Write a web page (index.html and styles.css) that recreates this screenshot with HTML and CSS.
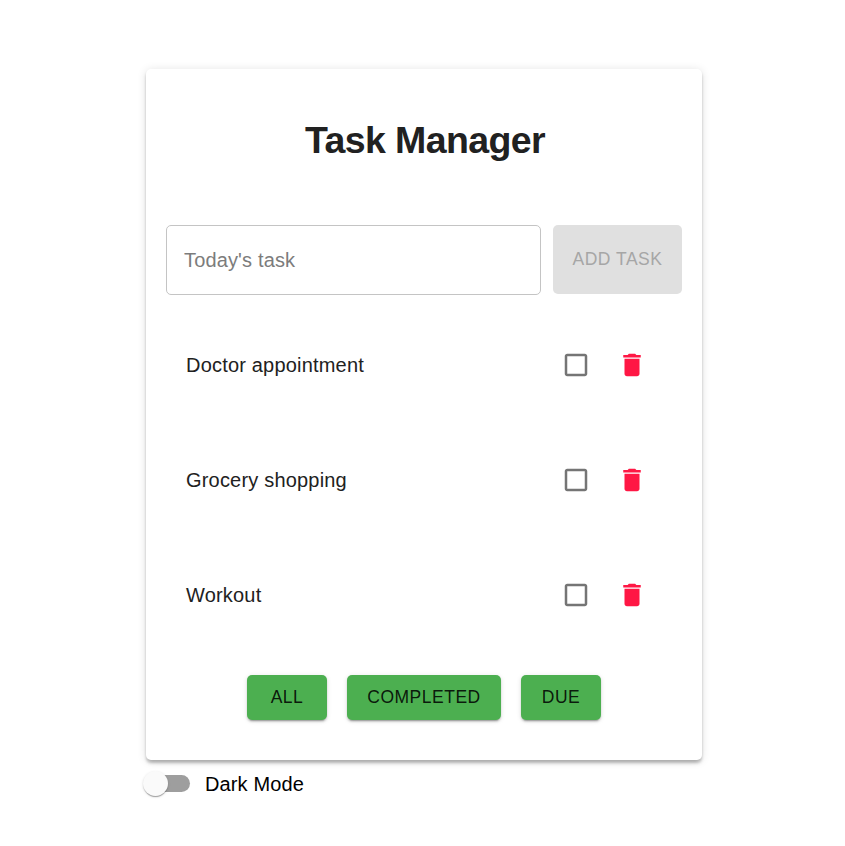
FILE: index.html
```html
<!DOCTYPE html>
<html lang="en">
<head>
<meta charset="utf-8">
<title>Task Manager</title>
<link rel="stylesheet" href="styles.css">
</head>
<body>
<svg class="sprite" width="0" height="0">
  <symbol id="box" viewBox="0 0 24 24"><path d="M19 5v14H5V5h14m0-2H5c-1.1 0-2 .9-2 2v14c0 1.1.9 2 2 2h14c1.1 0 2-.9 2-2V5c0-1.1-.9-2-2-2z"/></symbol>
  <symbol id="trash" viewBox="0 0 24 24"><path d="M6 19c0 1.1.9 2 2 2h8c1.1 0 2-.9 2-2V7H6v12zM19 4h-3.500l-1-1h-5l-1 1H5v2h14V4z"/></symbol>
</svg>
<main class="page">
  <section class="card">
    <h1 class="title">Task Manager</h1>
    <form class="entry">
      <input class="field" type="text" placeholder="Today's task" aria-label="Task">
      <button class="btn add" type="button" disabled>Add Task</button>
    </form>
    <ul class="tasks">
      <li class="task"><span class="name">Doctor appointment</span><svg class="icon"><use href="#box"/></svg><svg class="icon trash"><use href="#trash"/></svg></li>
      <li class="task"><span class="name">Grocery shopping</span><svg class="icon"><use href="#box"/></svg><svg class="icon trash"><use href="#trash"/></svg></li>
      <li class="task"><span class="name">Workout</span><svg class="icon"><use href="#box"/></svg><svg class="icon trash"><use href="#trash"/></svg></li>
    </ul>
    <div class="filters">
      <button class="btn filter" type="button">All</button>
      <button class="btn filter completed" type="button">Completed</button>
      <button class="btn filter" type="button">Due</button>
    </div>
  </section>
  <label class="mode"><span class="switch"><span class="thumb"></span></span>Dark Mode</label>
</main>
</body>
</html>
```
FILE: styles.css
```css
* { box-sizing: border-box; }
body {
  margin: 0;
  background: #fff;
  font-family: "Liberation Sans", Arial, sans-serif;
  font-size: 20px;
  color: #212121;
}
.sprite { display: block; }
.page { width: 556px; margin: 69px 0 0 146px; }
.card {
  height: 691px;
  padding: 45px 20px 0;
  border-radius: 5px;
  background: #fff;
  box-shadow: 0 4px 5px -2.5px rgba(0,0,0,.2), 0 2.5px 2.5px 0 rgba(0,0,0,.14), 0 1px 10px 0 rgba(0,0,0,.12);
}
.title {
  margin: 0 0 59px;
  padding-left: 2px;
  line-height: 52px;
  font-size: 37.5px;
  letter-spacing: -.6px;
  text-align: center;
}
.entry { display: flex; align-items: flex-start; gap: 12px; }
.field {
  width: 375px;
  height: 70px;
  padding: 0 17px;
  border: 1px solid #c4c4c4;
  border-radius: 5px;
  background: #fff;
  font: inherit;
  letter-spacing: .15px;
}
.field::placeholder { color: #7c7c7c; opacity: 1; }
.btn {
  border: 0;
  border-radius: 5px;
  font-family: inherit;
  font-size: 17.5px;
  letter-spacing: .5px;
  text-transform: uppercase;
  padding: 0;
}
.add { width: 129px; height: 69px; background: #e0e0e0; color: #a6a6a6; }
.tasks { list-style: none; margin: 12px 0 0; padding: 0 35px 0 20px; }
.task { display: flex; align-items: center; height: 115px; }
.name { flex: 1; padding-top: 2px; letter-spacing: .19px; }
.icon { width: 30px; height: 30px; fill: #757575; }
.trash { margin-left: 26px; fill: #ff1744; }
.filters { display: flex; justify-content: center; gap: 20px; margin-top: 23px; }
.filter {
  width: 80px;
  height: 45px;
  background: #4caf50;
  color: rgba(0, 0, 0, .87);
  box-shadow: 0 3px 1px -2px rgba(0,0,0,.2), 0 2px 2px 0 rgba(0,0,0,.14), 0 1px 5px 0 rgba(0,0,0,.12);
}
.completed { width: 154px; }
.mode { display: flex; align-items: center; height: 48px; color: #000; letter-spacing: .12px; }
.switch {
  position: relative;
  width: 42px;
  height: 17px;
  margin: 0 15px 1px 2px;
  border-radius: 9px;
  background: #9e9e9e;
}
.thumb {
  position: absolute;
  left: -5px;
  top: -4px;
  width: 25px;
  height: 25px;
  border-radius: 50%;
  background: #fafafa;
  box-shadow: 0 2px 1px -1px rgba(0,0,0,.2), 0 1px 1px 0 rgba(0,0,0,.14), 0 1px 3px 0 rgba(0,0,0,.12);
}
```
